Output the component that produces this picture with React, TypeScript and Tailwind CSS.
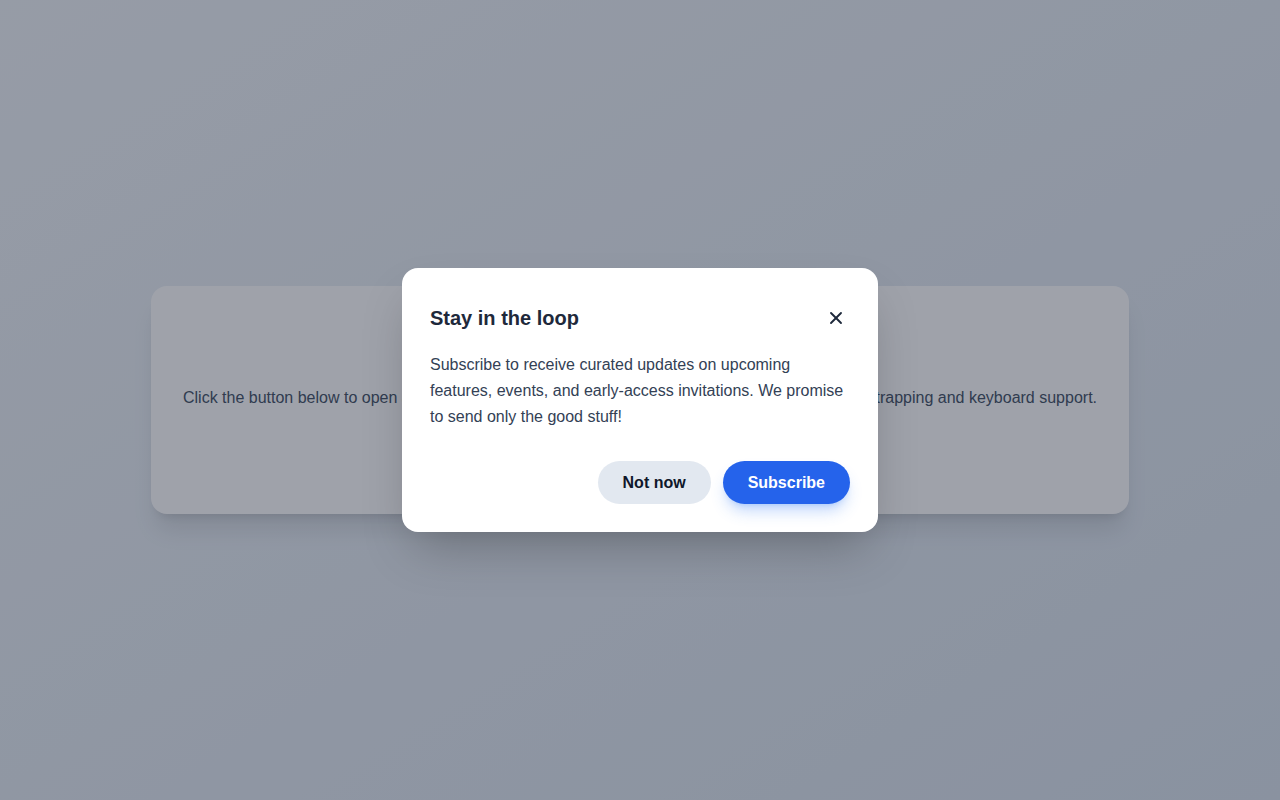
import { X } from "lucide-react";

export default function App() {
  return (
    <div
      className="relative h-screen w-full overflow-hidden bg-gradient-to-br from-slate-100 to-[#dce5ef]"
      style={{ fontFamily: '"Liberation Sans", Arial, sans-serif' }}
    >
      {/* Page content behind the dialog */}
      <main className="flex h-full items-center justify-center px-[151px]">
        <section className="flex h-[228px] w-full items-center justify-center rounded-2xl bg-white px-8 shadow-xl">
          <p className="mb-1 whitespace-nowrap text-center text-base leading-6 text-[#475569]">
            Click the button below to open an accessible dialog built with React and Vite, complete with focus trapping and keyboard support.
          </p>
        </section>
      </main>

      {/* Overlay */}
      <div className="absolute inset-0 flex items-center justify-center bg-slate-900/40">
        <div
          role="dialog"
          aria-modal="true"
          className="w-[476px] rounded-2xl bg-white px-7 pt-9 pb-7 shadow-2xl"
        >
          <div className="flex h-7 items-center justify-between">
            <h2 className="text-xl font-bold leading-7 text-[#1e293b]">Stay in the loop</h2>
            <button className="rounded-md p-1 text-[#1e293b]" aria-label="Close">
              <X size={20} strokeWidth={2.25} />
            </button>
          </div>
          <p className="mt-5 text-base leading-[26px] text-[#334155]">
            Subscribe to receive curated updates on upcoming features, events, and early-access invitations. We promise to send only the good stuff!
          </p>
          <div className="mt-[31px] flex justify-end gap-3">
            <button className="h-[43px] rounded-full bg-[#e2e8f0] px-[25px] text-base font-bold leading-6 text-[#0f172a]">
              Not now
            </button>
            <button className="h-[43px] rounded-full bg-[#2563eb] px-[25px] text-base font-bold leading-6 text-white shadow-lg shadow-[#3b82f6]/30">
              Subscribe
            </button>
          </div>
        </div>
      </div>
    </div>
  );
}
